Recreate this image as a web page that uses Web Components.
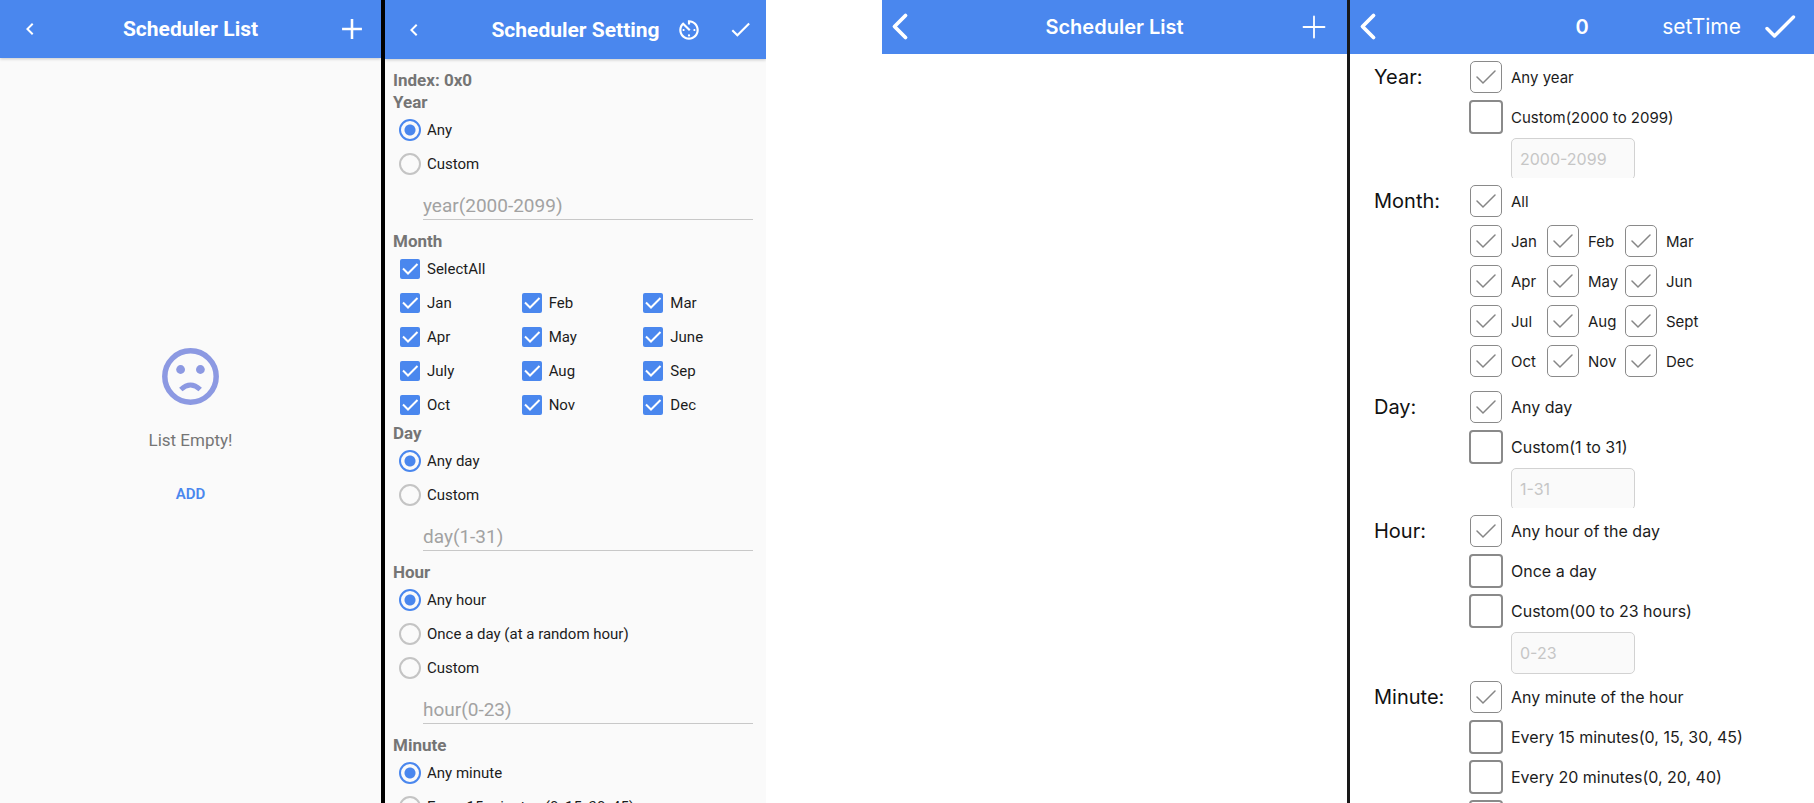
<!DOCTYPE html>
<html lang="en">
<head>
<meta charset="utf-8">
<title>Scheduler</title>
<style>
  html, body { margin: 0; height: 100%; }
  body { background: #fff; overflow: hidden; }
</style>
</head>
<body>
<scheduler-board></scheduler-board>

<script>
const define = (name, css, render) => {
  customElements.define(name, class extends HTMLElement {
    constructor() {
      super();
      this.attachShadow({ mode: 'open' });
    }
    connectedCallback() {
      this.shadowRoot.innerHTML = `<style>*{box-sizing:border-box}${css}</style>${render(this)}`;
    }
  });
};
const list = (el, name) => (el.getAttribute(name) || '').split('|').filter(Boolean);

const ICONS = {
  'chevron': [24, 24, '<path fill="currentColor" d="M15.41 7.41 14 6l-6 6 6 6 1.41-1.41L10.83 12z"/>'],
  'add': [34, 24, '<path fill="none" stroke="currentColor" stroke-width="1.8" d="M12 5v14M5 12h14"/>'],
  'timer': [26, 24, '<path fill="currentColor" d="M11 17c0 .55.45 1 1 1s1-.45 1-1-.45-1-1-1-1 .45-1 1zm0-14v4h2V5.08c3.39.49 6 3.39 6 6.92 0 3.87-3.13 7-7 7s-7-3.13-7-7c0-1.68.59-3.22 1.58-4.42L12 13l1.41-1.41-6.8-6.8v.02C4.42 6.45 3 9.05 3 12c0 4.97 4.02 9 9 9 4.97 0 9-4.03 9-9s-4.03-9-9-9h-1zm7 9c0-.55-.45-1-1-1s-1 .45-1 1 .45 1 1 1 1-.45 1-1zM6 12c0 .55.45 1 1 1s1-.45 1-1-.45-1-1-1-1 .45-1 1z"/>'],
  'done': [25, 24, '<path fill="currentColor" d="M9 16.17 4.83 12l-1.42 1.41L9 19 21 7l-1.41-1.41z"/>'],
  'ios-back': [30, 30, '<path fill="none" stroke="currentColor" stroke-width="3.8" stroke-linecap="round" stroke-linejoin="round" d="M20.500 3.500 9.500 14.500 20.500 25.500"/>'],
  'ios-add': [24, 24, '<path fill="none" stroke="currentColor" stroke-width="1.8" stroke-linecap="round" d="M12 1.500v21M1.500 12h21"/>'],
  'ios-done': [32, 32, '<path fill="none" stroke="currentColor" stroke-width="3.4" stroke-linecap="round" stroke-linejoin="round" d="M3 17.500 10.500 25 29.500 6"/>']
};

define('icon-button', `
  :host { display: block; flex: none; }
  button { display: block; padding: 0; border: 0; background: none; color: #fff; cursor: pointer; }
  svg { display: block; }
`, el => {
  const [size, box, shape] = ICONS[el.getAttribute('icon')];
  return `<button type="button" aria-label="${el.getAttribute('label')}"><svg width="${size}" height="${size}" viewBox="0 0 ${box} ${box}">${shape}</svg></button>`;
});

define('text-button', `
  :host { display: block; }
  button { display: block; padding: 0; border: 0; background: none; font: inherit; color: inherit; cursor: pointer; }
`, () => `<button type="button"><slot></slot></button>`);

define('app-bar', `
  :host { display: grid; grid-template-columns: 1fr auto 1fr; align-items: center; flex: none;
    height: var(--bar-height); background: #4a87ee; color: #fff; z-index: 1; }
  :host([raised]) { box-shadow: 0 1px 3px #0003; }
  h1 { margin: 0; font: var(--bar-font); white-space: nowrap; }
  .start { padding-left: var(--bar-left); }
  .end { display: flex; align-items: center; justify-content: flex-end; gap: var(--bar-gap); padding-right: var(--bar-right); }
`, () => `<div class="start"><slot name="start"></slot></div><h1><slot></slot></h1><div class="end"><slot name="end"></slot></div>`);

define('phone-screen', `
  :host { display: flex; flex-direction: column; min-width: 0; min-height: 0; overflow: hidden; background: #fff; }
  :host([kind="android"]) { background: #fafafa; font-family: Roboto, sans-serif; color: #1c1c1c;
    --bar-height: 58px; --bar-font: 700 21px/26px Roboto, sans-serif; --bar-left: 18px; --bar-right: 12px; --bar-gap: 26px; }
  :host([kind="ios"]) { font-family: Inter, sans-serif; color: #1c1c1c;
    --bar-height: 54px; --bar-font: 600 20px/26px Inter, sans-serif; --bar-left: 3px; --bar-right: 21px; --bar-gap: 24px; }
`, () => `<slot></slot>`);

define('empty-state', `
  :host { flex: 1; display: flex; flex-direction: column; align-items: center; justify-content: center; padding-top: 4px; }
  svg { display: block; color: #8c99e2; }
  p { margin: 24px 0 19px; font-size: 17px; line-height: 22px; color: #757575; }
  button { height: 48px; padding: 0 16px; border: 0; background: none; cursor: pointer;
    font: 600 15px/20px Roboto, sans-serif; color: #4a87ee; }
`, () => `
  <svg width="57" height="57" viewBox="0 0 57 57" aria-hidden="true">
    <circle cx="28.500" cy="28.500" r="25.700" fill="none" stroke="currentColor" stroke-width="5.500"/>
    <circle cx="18.600" cy="21.500" r="4.400" fill="currentColor"/>
    <circle cx="38.400" cy="21.500" r="4.400" fill="currentColor"/>
    <path d="M18.800 41.500Q28.500 32.500 38.200 41.500" fill="none" stroke="currentColor" stroke-width="5"/>
  </svg>
  <p>List Empty!</p>
  <button type="button">ADD</button>`);

/* Android form */
define('md-form', `
  :host { flex: 1; min-height: 0; overflow: hidden; display: block; padding-top: 10px; }
`, () => `<slot></slot>`);

define('md-heading', `
  :host { display: block; padding-left: 8px; }
  h2 { margin: 0; font-size: 17px; line-height: 22px; font-weight: 700; color: #757575; }
`, () => `<h2><slot></slot></h2>`);

define('md-radios', `
  :host { display: block; padding-left: 14px; }
  label { display: flex; align-items: center; gap: 6px; height: 34px; font-size: 15px; }
  input { appearance: none; width: 22px; height: 22px; margin: 0; flex: none; border: 2px solid #c4c4c4; border-radius: 50%; }
  input:checked { border-color: #4a87ee; background: radial-gradient(circle, #4a87ee 5px, transparent 6px); }
`, el => list(el, 'options').map((t, i) =>
  `<label><input type="radio" name="choice"${i ? '' : ' checked'}>${t}</label>`).join(''));

define('md-checks', `
  :host { display: grid; grid-template-columns: repeat(3, 1fr); padding: 0 2px 0 14px; }
  label { display: flex; align-items: center; gap: 6px; height: 34px; font-size: 15px; }
  .box { display: grid; width: 22px; height: 22px; flex: none; place-items: center; }
  .box > * { grid-area: 1 / 1; }
  input { appearance: none; width: 20px; height: 20px; margin: 0; border: 2px solid #757575; border-radius: 2px; }
  input:checked { border: 0; background: #4a87ee; }
  svg { visibility: hidden; pointer-events: none; }
  input:checked + svg { visibility: visible; }
`, el => list(el, 'options').map(t =>
  `<label><span class="box"><input type="checkbox" checked><svg width="20" height="20" viewBox="0 0 20 20"><path d="M3 9.500 8 14.500 17.500 5" fill="none" stroke="#fff" stroke-width="2"/></svg></span>${t}</label>`).join(''));

define('md-field', `
  :host { display: block; padding: 0 13px 10px 38px; }
  input { display: block; width: 100%; height: 39px; padding: 10px 0 0; border: 0; border-bottom: 1px solid #c8c8c8;
    border-radius: 0; outline: 0; background: none; font: 19px/26px Roboto, sans-serif; color: #1c1c1c; }
  input::placeholder { color: #a2a2a2; opacity: 1; }
`, el => `<input type="text" aria-label="${el.getAttribute('label')}" placeholder="${el.getAttribute('hint')}">`);

/* iOS form */
define('ios-form', `
  :host { flex: 1; min-height: 0; overflow: hidden; display: block; padding-top: 3px; }
`, () => `<slot></slot>`);

define('ios-section', `
  :host { display: grid; grid-template-columns: 95px 1fr; padding: 0 24px 3px; }
  :host([spaced]) { padding-bottom: 6px; }
  h2 { margin: 0; font-size: 20px; line-height: 40px; font-weight: 400; color: #111; white-space: nowrap; }
`, el => `<h2>${el.getAttribute('label')}</h2><div><slot></slot></div>`);

define('ios-checks', `
  :host { display: grid; font-size: 15px; }
  :host([large]) { font-size: 16px; }
  :host([months]) { grid-template-columns: 77px 78px 1fr; }
  label { display: flex; align-items: center; gap: 8px; height: 40px; white-space: nowrap; }
  .box { display: grid; width: 34px; height: 34px; flex: none; place-items: center; }
  .box > * { grid-area: 1 / 1; }
  input { appearance: none; width: 34px; height: 34px; margin: 0; border: 2px solid #8a8a8a; border-radius: 4px; background: #fff; }
  input:checked { width: 32px; height: 32px; border-width: 1px; border-radius: 5px; }
  svg { visibility: hidden; pointer-events: none; }
  input:checked + svg { visibility: visible; }
`, el => {
  const checked = el.hasAttribute('all') ? () => true : i => i === 0;
  return list(el, 'options').map((t, i) =>
    `<label><span class="box"><input type="checkbox"${checked(i) ? ' checked' : ''}><svg width="20" height="16" viewBox="0 0 20 16"><path d="M1 8 7 14 19 2" fill="none" stroke="#868686" stroke-width="1.500" stroke-linecap="round"/></svg></span>${t}</label>`).join('');
});

define('ios-field', `
  :host { display: block; padding: 1px 0 0 42px; }
  :host([cropped]) { height: 41px; overflow: hidden; }
  input { display: block; width: 124px; height: 42px; padding: 0 8px; border: 1px solid #d2d2d2; border-radius: 5px;
    outline: 0; background: #fafafa; font: 16px/20px Inter, sans-serif; color: #1c1c1c; }
  input::placeholder { color: #c6c6c6; opacity: 1; }
`, el => `<input type="text" aria-label="${el.getAttribute('label')}" placeholder="${el.getAttribute('hint')}">`);

define('scheduler-board', `
  :host { display: grid; height: 100vh; grid-template-rows: minmax(0, 1fr);
    grid-template-columns: 381fr 4px 381fr 116fr 465fr 3px 464fr; }
  .rule { background: #000; }
  .rule.thin { background: #181818; }
  .setting { --bar-height: 59px; --bar-left: 17px; --bar-right: 13px; }
  .time { --bar-right: 18px; --bar-gap: 23px; }
  text-button { font: 400 21px/26px Inter, sans-serif; }
`, () => `
  <phone-screen kind="android">
    <app-bar raised>
      <icon-button slot="start" icon="chevron" label="Back"></icon-button>
      Scheduler List
      <icon-button slot="end" icon="add" label="Add"></icon-button>
    </app-bar>
    <empty-state></empty-state>
  </phone-screen>
  <div class="rule"></div>
  <phone-screen kind="android">
    <app-bar raised class="setting">
      <icon-button slot="start" icon="chevron" label="Back"></icon-button>
      Scheduler Setting
      <icon-button slot="end" icon="timer" label="Set time"></icon-button>
      <icon-button slot="end" icon="done" label="Done"></icon-button>
    </app-bar>
    <md-form>
      <md-heading>Index: 0x0</md-heading>
      <md-heading>Year</md-heading>
      <md-radios options="Any|Custom"></md-radios>
      <md-field label="Year" hint="year(2000-2099)"></md-field>
      <md-heading>Month</md-heading>
      <md-checks options="SelectAll"></md-checks>
      <md-checks options="Jan|Feb|Mar|Apr|May|June|July|Aug|Sep|Oct|Nov|Dec"></md-checks>
      <md-heading>Day</md-heading>
      <md-radios options="Any day|Custom"></md-radios>
      <md-field label="Day" hint="day(1-31)"></md-field>
      <md-heading>Hour</md-heading>
      <md-radios options="Any hour|Once a day (at a random hour)|Custom"></md-radios>
      <md-field label="Hour" hint="hour(0-23)"></md-field>
      <md-heading>Minute</md-heading>
      <md-radios options="Any minute|Every 15 minutes (0, 15, 30, 45)"></md-radios>
    </md-form>
  </phone-screen>
  <div></div>
  <phone-screen kind="ios">
    <app-bar>
      <icon-button slot="start" icon="ios-back" label="Back"></icon-button>
      Scheduler List
      <icon-button slot="end" icon="ios-add" label="Add"></icon-button>
    </app-bar>
  </phone-screen>
  <div class="rule thin"></div>
  <phone-screen kind="ios">
    <app-bar class="time">
      <icon-button slot="start" icon="ios-back" label="Back"></icon-button>
      0
      <text-button slot="end">setTime</text-button>
      <icon-button slot="end" icon="ios-done" label="Done"></icon-button>
    </app-bar>
    <ios-form>
      <ios-section label="Year:">
        <ios-checks options="Any year|Custom(2000 to 2099)"></ios-checks>
        <ios-field cropped label="Year" hint="2000-2099"></ios-field>
      </ios-section>
      <ios-section label="Month:" spaced>
        <ios-checks options="All"></ios-checks>
        <ios-checks months all options="Jan|Feb|Mar|Apr|May|Jun|Jul|Aug|Sept|Oct|Nov|Dec"></ios-checks>
      </ios-section>
      <ios-section label="Day:">
        <ios-checks large options="Any day|Custom(1 to 31)"></ios-checks>
        <ios-field cropped label="Day" hint="1-31"></ios-field>
      </ios-section>
      <ios-section label="Hour:">
        <ios-checks large options="Any hour of the day|Once a day|Custom(00 to 23 hours)"></ios-checks>
        <ios-field label="Hour" hint="0-23"></ios-field>
      </ios-section>
      <ios-section label="Minute:">
        <ios-checks large options="Any minute of the hour|Every 15 minutes(0, 15, 30, 45)|Every 20 minutes(0, 20, 40)|Custom(0 to 59)"></ios-checks>
      </ios-section>
    </ios-form>
  </phone-screen>`);
</script>
</body>
</html>
